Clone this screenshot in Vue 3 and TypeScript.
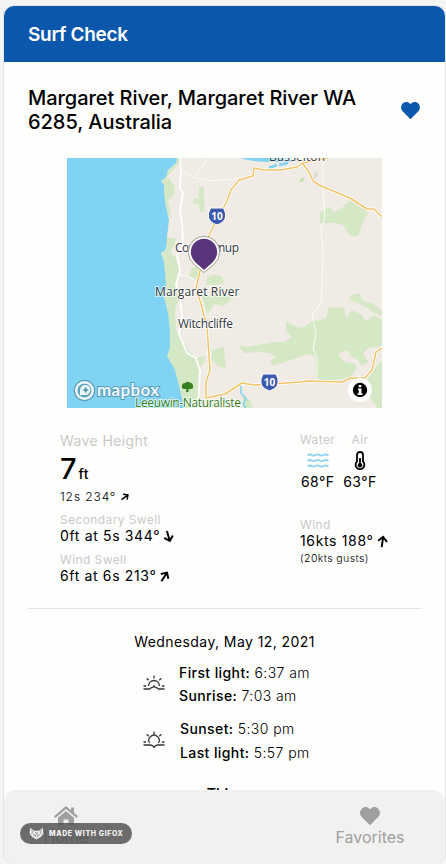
<script setup lang="ts">
interface Reading {
  label: string
  value: string
  angle: number
}

const swells: Reading[] = [
  { label: 'Secondary Swell', value: '0ft at 5s 344°', angle: 164 },
  { label: 'Wind Swell', value: '6ft at 6s 213°', angle: 33 },
]

const arrow = 'M8 15V2M2.500 7.800L8 2.200L13.500 7.800'
const heart =
  'M12 21.2L2.9 12C.4 9.400.5 5.300 2.9 2.900C5.300.5 9 .6 11.200 2.900L12 3.700L12.800 2.900C15 .6 18.700.5 21.100 2.900C23.500 5.300 23.600 9.400 21.100 12Z'
const highways =
  'M328 158L303 163L297 167L281 170L264 170L254 168L253 176L239 180L231 190L226 203L216 221L207 240L200 271L196 288L201 304L207 327L210 370L206 382V398M303 164L309 172L313 181L321 186L350 198L367 209L374 209L382 217M206 398L225 394L242 383L254 385L301 382L308 381L342 382L351 378L365 378L372 370L376 352L382 348'
</script>

<template>
  <div class="app">
    <header class="bar">Surf Check</header>

    <main class="content">
      <section class="place">
        <h1>Margaret River, Margaret River WA 6285, Australia</h1>
        <svg class="fav" viewBox="0 0 24 22"><path :d="heart" /></svg>
      </section>

      <svg class="map" viewBox="67 158 315 250">
        <rect x="67" y="158" width="315" height="250" fill="#f0ebe4" />
        <g fill="#d5e8c6">
          <path d="M177 158L182 160L173 170L167 177L171 181L175 187L174 195L168 200L170 210L171 219L167 213L164 195L161 182L167 170Z" />
          <path d="M199 186L204 187L204 201L205 211L200 212L199 205L193 203L194 199L199 198Z" />
          <path d="M166 238L175 238L175 245L170 252L176 258L180 270L175 284L181 297L175 308L176 330L188 350L199 360L200 408L183 408L178 382L167 358L170 330L164 295L165 275L162 252Z" />
          <path d="M192 268L198 266L201 274L195 279L189 276ZM207 277L214 274L222 277L225 283L216 285L206 285ZM203 292L211 296L222 294L232 298L224 306L214 304L208 314L202 300Z" />
          <path d="M212 350L224 347L226 369L218 366L211 359ZM196 358L206 356L203 365L197 369Z" />
          <path d="M320 213L329 207L334 212L342 208L350 200L357 205L364 209L368 213L363 222L358 236L353 237L347 232L343 225L334 223L320 223Z" />
          <path d="M238 345L247 347L263 344L274 342L284 342L292 337L286 331L286 321L294 326L302 328L307 325L313 320L319 321L327 317L328 308L336 307L344 308L346 318L352 310L362 315L366 321L374 315L382 320V346L368 348L363 353L368 362L362 366L358 360L352 357L347 350L338 354L345 362L355 364L357 369L350 377L335 381L316 379L315 357L307 354L294 359L273 366L270 361L276 357L270 353L258 352L244 353Z" />
          <path d="M350 296L359 293L363 301L372 303L382 311V316L373 312L368 308L358 303L350 300ZM363 386L371 373L382 360V408H378L370 398Z" />
          <path d="M243 394L250 400L253 408H243Z" />
        </g>
        <path d="M67 158H177L176 163L168 170L166 177L161 181L164 185L164 193L166 207L169 220L167 237L166 249L161 253L164 262L165 273L166 286L164 297L168 313L170 330L170 347L167 356L175 370L180 390L184 408H67Z" fill="#80d3f2" />
        <path d="M240 158Q254 162 270 162H291V158Z" fill="#80d3f2" />
        <path d="M269 168L277 165M279 165L288 163" stroke="#80d3f2" stroke-width="2.500" />
        <path d="M299 181L303 177L304 180L302 182Z" fill="#b9e5a6" />
        <path d="M313 177L316 171L318 174L314 180Z" fill="#dcdad6" />
        <path d="M241 386V393L246 399L243 404L246 408" fill="none" stroke="#80d3f2" stroke-width="1.500" />

        <g fill="none" stroke="#fff" stroke-linejoin="round">
          <path d="M180 158L181 170L180 188L183 193L180 210L182 224L183 244L177 256L180 270L176 285L180 300L182 315L179 334L187 353L196 358L200 371L198 408" stroke-width="1.800" />
          <path d="M181 170L192 177L213 181L223 179L232 180L238 178M195 177L207 159M180 275L188 276L198 283M212 298L204 291M200 297L205 305" stroke-width=".8" />
          <path d="M323 158L323 192L325 217L321 229L323 250L322 280L321 303L312 315L316 334L313 348L317 358V379" stroke-width=".8" />
        </g>
        <g fill="none" stroke-linejoin="round">
          <path :d="highways" stroke="#fff" stroke-width="3" />
          <path :d="highways" stroke="#f0c465" stroke-width="1.500" />
        </g>

        <g class="place-name">
          <text x="269" y="161" textLength="56">Busselton</text>
          <text x="175" y="251.500" textLength="64">Cowaramup</text>
          <text x="155" y="296" textLength="84.500">Margaret River</text>
          <text x="178" y="328" textLength="55">Witchcliffe</text>
          <text class="park" x="135" y="407" textLength="106">Leeuwin-Naturaliste</text>
        </g>
        <path d="M186 392L186.500 389H184Q181 388 182 385.500Q182 383 185 383Q187 381 190 382.500Q193 383 193 386Q194 389 190 389H188.500L188.500 392Z" fill="#37801f" />

        <g v-for="p in [{ x: 217, y: 216 }, { x: 269.500, y: 382 }]" :key="p.x" :transform="`translate(${p.x} ${p.y})`">
          <path d="M-6.500-8H6.500L8.500-3V1Q8 6 0 9Q-8 6-8.500 1V-3Z" fill="#3e58ac" stroke="#fff" stroke-width="1" />
          <text class="shield" x="0" y="3.500">10</text>
        </g>

        <path d="M204 272.500L194 264.500Q188.300 259 188.300 252A15.700 15.700 0 0 1 219.700 252Q219.700 259 214 264.500Z" fill="#fff" stroke="#8b8680" stroke-width=".8" />
        <path d="M204 270L195 262Q190.800 257.500 190.800 252A13.200 13.200 0 0 1 217.200 252Q217.200 257.500 213 262Z" fill="#59357c" />

        <g stroke="#5a9cb8">
          <circle cx="84.500" cy="390.500" r="9.500" fill="none" stroke-width="2.500" />
          <circle cx="84.500" cy="390.500" r="8.300" fill="#5ea4c1" stroke="#eef9fd" stroke-width="2.500" />
          <path d="M80 395V390Q80.500 385 85.500 385Q90.500 385.500 90.500 390Q90 395 85 395Z" fill="#eef9fd" stroke="none" />
          <path d="M85.700 386.500L86.700 388.900L89 390L86.700 391L85.700 393.500L84.600 391L82.300 390L84.600 388.900Z" fill="#5295b2" stroke="none" />
          <text class="mapbox" x="97" y="395.500" textLength="62">mapbox</text>
        </g>

        <circle cx="360" cy="390" r="12" fill="#fff" />
        <circle cx="360" cy="390" r="7.200" />
        <path d="M358 388.500H361.500V393.500H362.500V395H357.500V393.500H358.700V390H358ZM358.700 385H361.300V387.200H358.700Z" fill="#fff" />
      </svg>

      <section class="conditions">
        <div class="swell">
          <div class="label wave">Wave Height</div>
          <div class="height">7<span>ft</span></div>
          <div class="period">
            12s 234°
            <svg class="arrow small" viewBox="0 0 16 16" :style="{ transform: 'rotate(54deg)' }"><path :d="arrow" /></svg>
          </div>
          <div v-for="s in swells" :key="s.label" class="reading">
            <div class="label">{{ s.label }}</div>
            <div class="value">
              {{ s.value }}
              <svg class="arrow" viewBox="0 0 16 16" :style="{ transform: `rotate(${s.angle}deg)` }"><path :d="arrow" /></svg>
            </div>
          </div>
        </div>

        <div class="weather">
          <div class="temps">
            <div class="temp">
              <div class="label">Water</div>
              <svg class="waves" viewBox="0 0 22 16">
                <path d="M.5 2.500Q2.500.8 4.500 2T8.500 2T12.500 2T16.500 2T21.500 2.500M.5 8Q2.500 6.300 4.500 7.500T8.500 7.500T12.500 7.500T16.500 7.500T21.500 8M.5 13.500Q2.500 11.800 4.500 13T8.500 13T12.500 13T16.500 13T21.500 13.500" />
              </svg>
              <div class="value">68°F</div>
            </div>
            <div class="temp">
              <div class="label">Air</div>
              <svg class="thermo" viewBox="0 0 12 20">
                <path d="M3 10.500V4A3 3 0 0 1 9 4V10.500A4.400 4.400 0 1 1 3 10.500Z" fill="none" stroke="#000" stroke-width="1.800" />
                <path d="M6 7V14" stroke="#000" stroke-width="1.800" />
                <circle cx="6" cy="14.200" r="2.300" />
              </svg>
              <div class="value">63°F</div>
            </div>
          </div>
          <div class="label">Wind</div>
          <div class="value">
            16kts 188°
            <svg class="arrow" viewBox="0 0 16 16" :style="{ transform: 'rotate(8deg)' }"><path :d="arrow" /></svg>
          </div>
          <div class="gusts">(20kts gusts)</div>
        </div>
      </section>

      <section class="sun">
        <div class="date">Wednesday, May 12, 2021</div>
        <div class="sunrow">
          <svg class="sunicon" viewBox="0 0 22 16">
            <path d="M11 .5V3.500M3.800 3.300L5.700 5.200M18.200 3.300L16.300 5.200M.5 11H3M19 11H21.500M5.500 11A5.500 5.500 0 0 1 16.500 11M.5 14H6.500L8.500 12.500L9.800 12.300L11 10.800L12.200 12.300L13.500 12.500L15.500 14H21.500" />
          </svg>
          <div class="times">
            <div><b>First light:</b> 6:37 am</div>
            <div><b>Sunrise:</b> 7:03 am</div>
          </div>
        </div>
        <div class="sunrow set">
          <svg class="sunicon" viewBox="0 0 22 18">
            <path d="M11 .5V3.500M3.800 3.300L5.700 5.200M18.200 3.300L16.300 5.200M.5 11H3M19 11H21.500M6.500 12A5.200 5.200 0 1 1 15.500 12M.5 14H7.500L9.300 14.500L11 16.300L12.700 14.500L14.500 14H21.500" />
          </svg>
          <div class="times last">
            <div><b>Sunset:</b> 5:30 pm</div>
            <div><b>Last light:</b> 5:57 pm</div>
          </div>
        </div>
        <div class="tides">Tides</div>
      </section>
    </main>

    <nav class="tabs">
      <div class="tab">
        <svg class="home" viewBox="0 0 24 20">
          <path d="M12 0L17 4.200V1.500H20V6.800L24 10.200L22.600 12L12 3L1.400 12L0 10.200Z" />
          <path d="M12 5L20 11.800V19H14.500V13.500H9.500V19H4V11.800Z" />
        </svg>
        <span>Home</span>
      </div>
      <div class="tab">
        <svg class="tabheart" viewBox="0 0 24 22"><path :d="heart" /></svg>
        <span>Favorites</span>
      </div>
    </nav>

    <div class="badge">
      <svg viewBox="0 0 16 14">
        <path d="M1 .8L5.500 4H10.500L15 .8L15.300 7.500L12.500 10.800L8 13.400L3.500 10.800L.7 7.500Z" fill="#eee" />
        <path d="M2.200 3L4.500 5.500L2.200 7.500M13.800 3L11.500 5.500L13.800 7.500M4 8L7 9L6.500 11M12 8L9 9L9.500 11M7 5.500L8 8L9 5.500" fill="none" stroke="#777" stroke-width=".8" />
      </svg>
      <span>MADE WITH GIFOX</span>
    </div>
  </div>
</template>

<style>
body {
  background: #f4f4f4;
}
</style>

<style scoped>
.app {
  position: relative;
  box-sizing: border-box;
  display: flex;
  flex-direction: column;
  width: 441px;
  height: 857px;
  margin: 6px 0 0 4px;
  overflow: hidden;
  border-radius: 10px;
  background: #fefefd;
  box-shadow: 0 0 0 1px #e4e4e4;
  color: #000;
  font-family: Inter, 'Liberation Sans', sans-serif;
}
svg {
  display: block;
  flex: none;
}
.bar {
  flex: none;
  height: 56px;
  padding-left: 24px;
  background: #0b57ac;
  color: #fff;
  font-size: 19px;
  font-weight: 600;
  line-height: 57px;
  letter-spacing: -0.3px;
}
.content {
  flex: 1;
  min-height: 0;
  overflow: hidden;
  padding: 24px 24px 0;
}
.place {
  display: flex;
  justify-content: space-between;
  align-items: center;
  height: 48px;
}
h1 {
  width: 345px;
  margin: 0;
  font-size: 20px;
  font-weight: 500;
  line-height: 24px;
  letter-spacing: -0.04px;
}
.fav {
  width: 21px;
  height: 19px;
  fill: #0b57ac;
}
.map {
  width: 315px;
  height: 250px;
  margin: 24px 0 0 39px;
}
.place-name {
  fill: #333942;
  stroke: #fff;
  stroke-opacity: 0.7;
  stroke-width: 2px;
  paint-order: stroke;
  font: 12px 'Open Sans', sans-serif;
}
.park {
  fill: #37801f;
  font-weight: 500;
}
.shield {
  fill: #fff;
  font: 700 10px 'Open Sans', sans-serif;
  text-anchor: middle;
}
.mapbox {
  fill: #eef9fd;
  stroke-width: 2px;
  paint-order: stroke;
  font: 700 17px Lato, sans-serif;
}
.conditions {
  display: flex;
  height: 176px;
  margin-top: 24px;
  padding-left: 32px;
  border-bottom: 1px solid #e4e4e4;
}
.swell {
  width: 240px;
}
.label {
  color: #c9c9c9;
  font-size: 12px;
  line-height: 16px;
  letter-spacing: 0.4px;
}
.label.wave {
  font-size: 14px;
  line-height: 18px;
}
.height {
  display: flex;
  align-items: baseline;
  height: 38px;
  font-size: 29px;
  font-weight: 500;
  line-height: 38px;
}
.height span {
  margin-left: 2px;
  font-size: 14px;
  letter-spacing: 0.3px;
}
.period {
  display: flex;
  align-items: center;
  height: 17px;
  margin-bottom: 7px;
  font-size: 12px;
  font-weight: 300;
  letter-spacing: 0.9px;
}
.arrow {
  width: 13px;
  height: 13px;
  margin-left: 2px;
  fill: none;
  stroke: #000;
  stroke-width: 2.4;
}
.arrow.small {
  width: 10px;
  height: 10px;
  margin-left: 4px;
}
.value {
  display: flex;
  align-items: center;
  height: 16px;
  font-size: 14px;
  line-height: 16px;
  letter-spacing: 0.65px;
}
.reading {
  margin-bottom: 8px;
}
.temps {
  display: flex;
  gap: 8px;
  height: 85px;
}
.temp {
  display: flex;
  flex-direction: column;
  align-items: center;
}
.temp .value {
  margin-top: auto;
  margin-bottom: 27px;
  letter-spacing: 0.4px;
}
.waves {
  width: 22px;
  height: 16px;
  margin-top: 5px;
  fill: none;
  stroke: #8fd3f3;
  stroke-width: 1.8;
}
.thermo {
  width: 12px;
  height: 20px;
  margin-top: 3px;
}
.gusts {
  margin-top: 2px;
  font-size: 10.5px;
  font-weight: 300;
  line-height: 16px;
  letter-spacing: 0.4px;
}
.sun {
  display: flex;
  flex-direction: column;
  align-items: center;
}
.date {
  margin-top: 24px;
  font-size: 14px;
  line-height: 18px;
  letter-spacing: 0.42px;
}
.sunrow {
  display: flex;
  align-items: center;
  width: 163px;
  margin-top: 10px;
}
.sunicon {
  width: 22px;
  height: 16px;
  margin: -3px 14px 0 0;
  fill: none;
  stroke: #333;
  stroke-width: 1.3;
}
.times {
  font-size: 14px;
  font-weight: 300;
  line-height: 23px;
  letter-spacing: 0.4px;
  white-space: nowrap;
}
.times b {
  font-weight: 450;
}
.sunrow.set .sunicon {
  height: 18px;
  margin-right: 15px;
}
.times.last {
  line-height: 24px;
}
.tides {
  margin-top: 17px;
  font-size: 14px;
  font-weight: 600;
  line-height: 24px;
  transform: translateX(1px);
}
.tabs {
  display: flex;
  justify-content: space-between;
  flex: none;
  height: 73px;
  border-radius: 12px 12px 0 0;
  background: #f1f1f0;
  color: #a0a0a0;
  font-size: 16px;
}
.tab {
  display: flex;
  flex-direction: column;
  align-items: center;
  width: 124px;
  padding-top: 16px;
}
.tab:last-child {
  width: 150px;
}
.tab span {
  line-height: 20px;
  margin-top: 1px;
}
.tab svg {
  fill: #a0a0a0;
}
.home {
  width: 24px;
  height: 20px;
}
.tabheart {
  width: 22px;
  height: 20px;
}
.badge {
  position: absolute;
  left: 16px;
  top: 817px;
  display: flex;
  align-items: center;
  box-sizing: border-box;
  width: 112px;
  height: 21px;
  padding-left: 9px;
  border-radius: 11px;
  background: rgba(80, 80, 80, 0.83);
  color: #f4f4f4;
  font-size: 7px;
  font-weight: 800;
  letter-spacing: 0.6px;
  white-space: nowrap;
}
.badge svg {
  width: 15px;
  height: 13px;
  margin-right: 5px;
}
</style>
